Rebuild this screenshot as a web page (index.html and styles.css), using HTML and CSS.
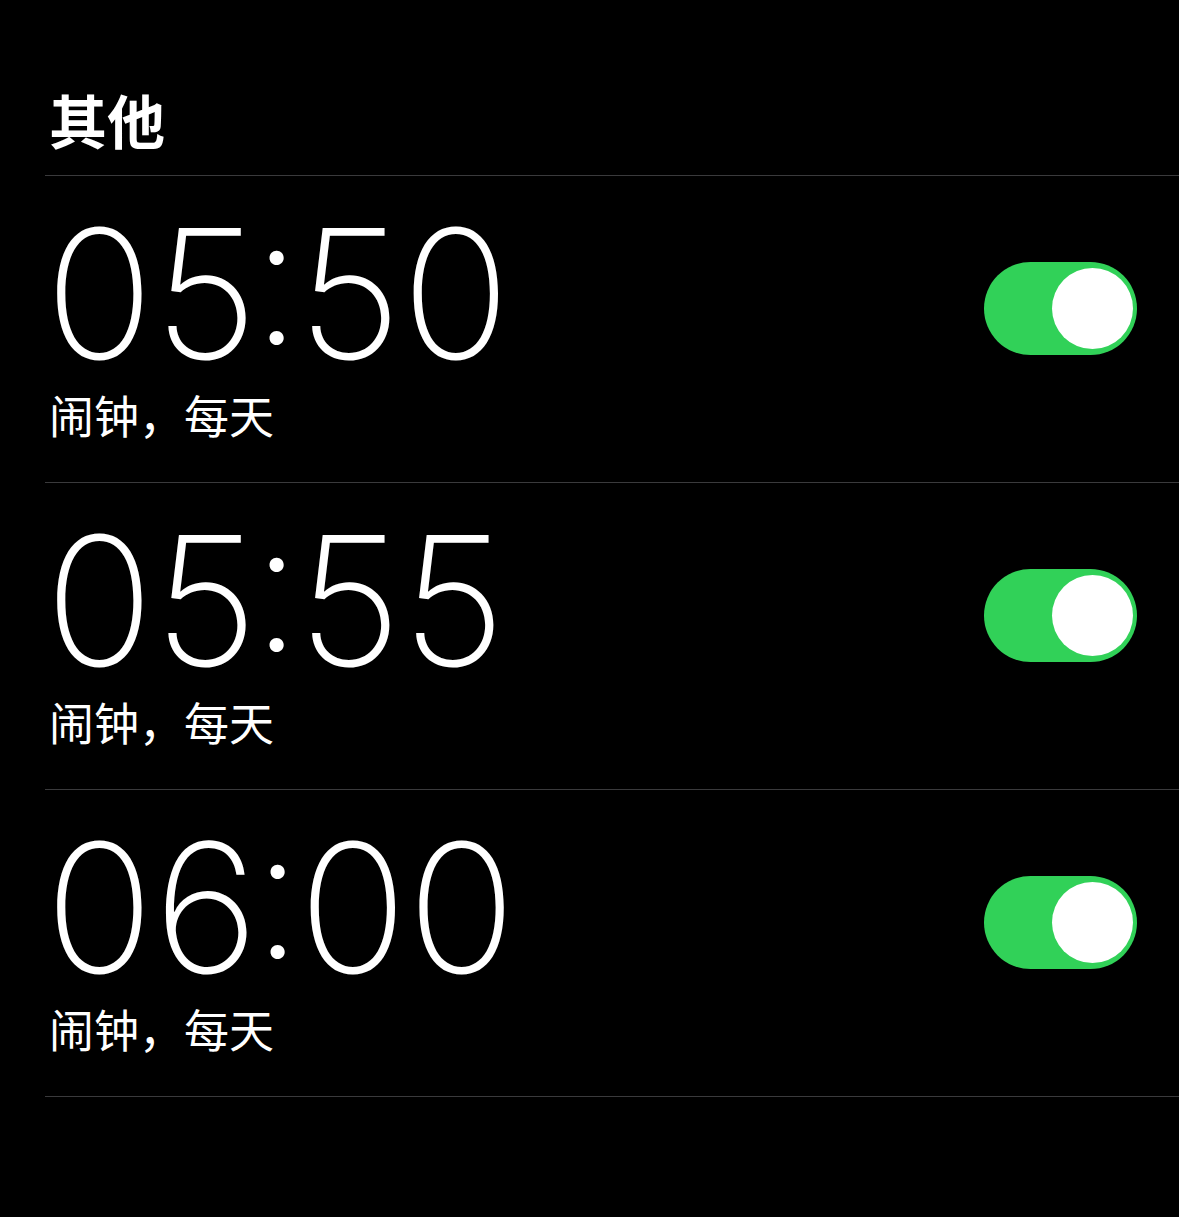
FILE: index.html
```html
<!DOCTYPE html>
<html lang="zh-CN">
<head>
<meta charset="utf-8">
<title>闹钟</title>
<link rel="stylesheet" href="styles.css">
</head>
<body>
<main class="screen">
  <h1 class="section-title">其他</h1>
  <ul class="alarm-list">
    <li class="alarm">
      <div class="alarm-info">
        <div class="alarm-time">05<span class="colon">:</span>50</div>
        <div class="alarm-label">闹钟，每天</div>
      </div>
      <div class="toggle on"><span class="knob"></span></div>
    </li>
    <li class="alarm">
      <div class="alarm-info">
        <div class="alarm-time">05<span class="colon">:</span>55</div>
        <div class="alarm-label">闹钟，每天</div>
      </div>
      <div class="toggle on"><span class="knob"></span></div>
    </li>
    <li class="alarm">
      <div class="alarm-info">
        <div class="alarm-time">06<span class="colon">:</span>00</div>
        <div class="alarm-label">闹钟，每天</div>
      </div>
      <div class="toggle on"><span class="knob"></span></div>
    </li>
  </ul>
</main>
</body>
</html>
```

FILE: styles.css
```css
html, body {
  margin: 0;
  padding: 0;
  background: #000;
}
body {
  width: 1179px;
  height: 1217px;
  overflow: hidden;
  color: #fff;
  font-family: Inter, "Noto Sans CJK SC", sans-serif;
}
.screen {
  padding-left: 45px;
}
.section-title {
  margin: 0;
  height: 176px;
  box-sizing: border-box;
  padding-top: 81px;
  padding-left: 4px;
  font-family: "Noto Sans CJK SC", sans-serif;
  font-weight: 700;
  font-size: 58px;
  line-height: 76px;
  border-bottom: 1px solid #3a3a3c;
}
.alarm-list {
  list-style: none;
  margin: 0;
  padding: 0;
}
.alarm {
  display: flex;
  justify-content: space-between;
  align-items: flex-start;
  height: 306px;
  border-bottom: 1px solid #3a3a3c;
  padding-right: 42px;
}
.alarm-info {
  display: flex;
  flex-direction: column;
  padding-top: 33px;
}
.alarm-time {
  font-family: Inter, sans-serif;
  font-weight: 200;
  font-size: 180px;
  line-height: 170px;
  letter-spacing: 0;
}
.colon {
  display: inline-block;
  margin-left: -6px;
  margin-right: -4px;
  transform: translateY(-15px);
}
.alarm-label {
  margin-top: 8px;
  font-family: "Noto Sans CJK SC", sans-serif;
  font-weight: 400;
  font-size: 45px;
  line-height: 56px;
  padding-left: 4px;
}
.toggle {
  margin-top: 86px;
  width: 153px;
  height: 93px;
  border-radius: 47px;
  background: #31d158;
  box-sizing: border-box;
  padding: 6px 4px 6px 0;
  display: flex;
  justify-content: flex-end;
}
.knob {
  width: 81px;
  height: 81px;
  border-radius: 50%;
  background: #fff;
}
```
